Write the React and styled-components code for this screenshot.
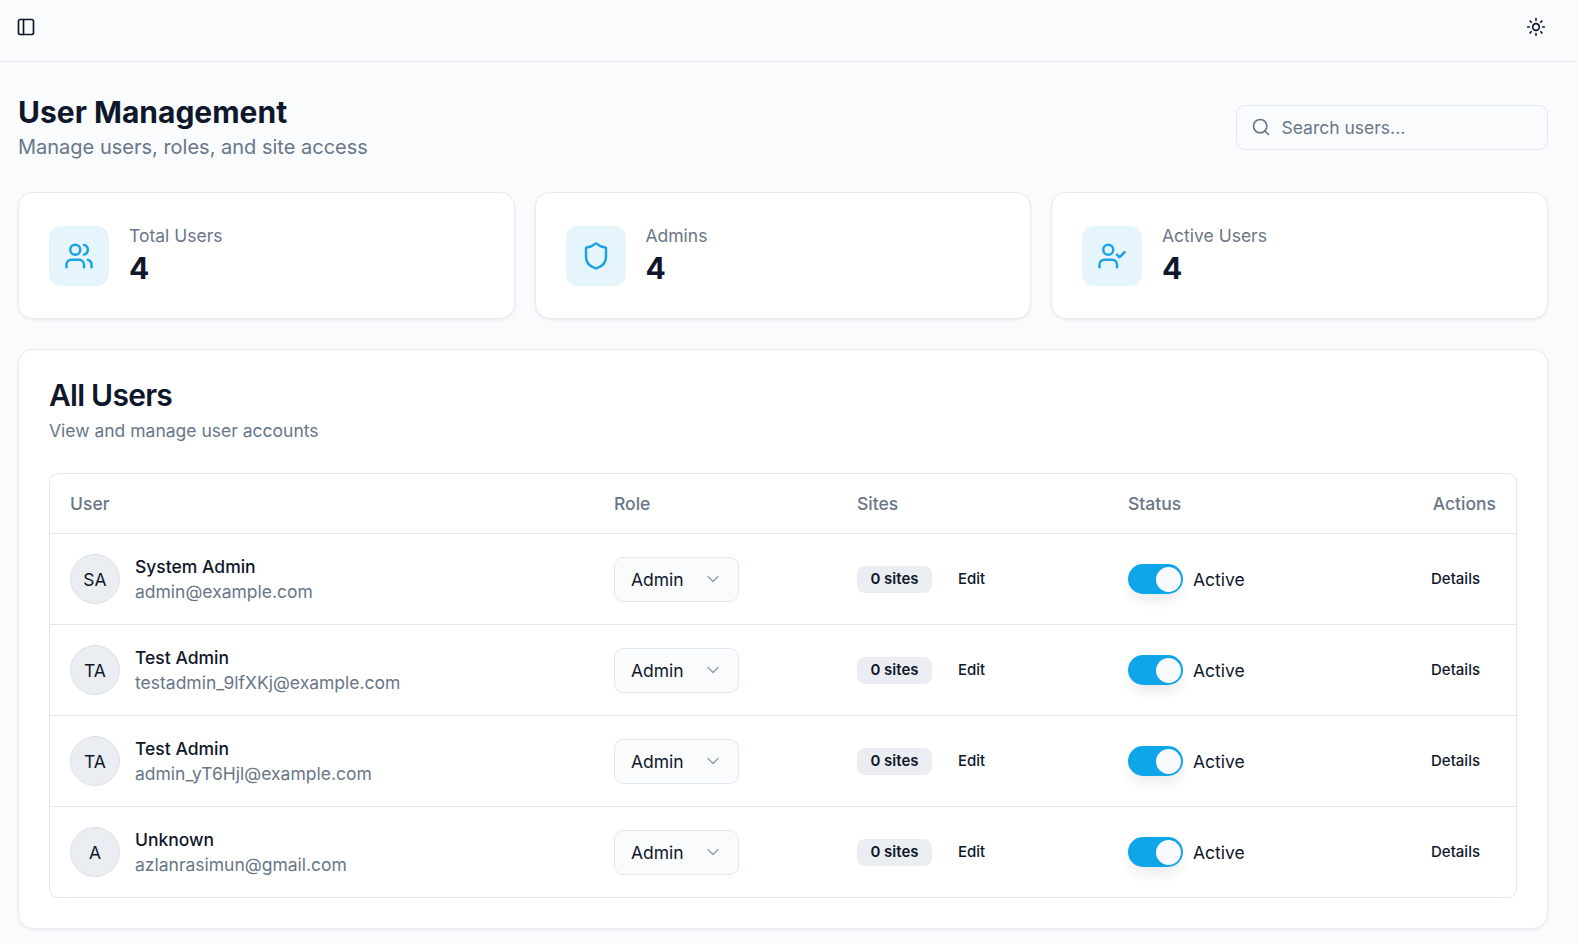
import React from 'react'
import styled, { createGlobalStyle } from 'styled-components'
import { PanelLeft, Sun, Search, Users, Shield, UserCheck, ChevronDown } from 'lucide-react'

const GlobalStyle = createGlobalStyle`
  html, body {
    margin: 0;
    padding: 0;
    background: #ffffff;
  }
  body {
    font-family: Inter, "Liberation Sans", sans-serif;
    color: #0f172a;
  }
  * { box-sizing: border-box; }
`

//----------------------------//
//   Page shell
//----------------------------//
const Page = styled.div`
  margin-right: 4px;
  height: 944px;
  overflow: hidden;
  background: #f9fbfd;
`
const TopBar = styled.header`
  height: 62px;
  padding: 0 32px 7px 16px;
  display: flex;
  align-items: center;
  justify-content: space-between;
  border-bottom: 1px solid #e2e8f0;
`
const IconButton = styled.span`
  display: flex;
  color: #0f172a;
`
const Main = styled.main`
  padding: 32px 30.5px 0 18px;
`
const PageHead = styled.div`
  display: flex;
  align-items: center;
  justify-content: space-between;
  margin-bottom: 31px;
`
const Title = styled.h1`
  margin: 0;
  font-size: 30px;
  line-height: 37.5px;
  font-weight: 700;
`
const Subtitle = styled.p`
  margin: 1px 0 0;
  font-size: 20px;
  line-height: 28px;
  color: #687688;
`
const SearchBox = styled.div`
  width: 312px;
  height: 45px;
  padding: 0 14px;
  display: flex;
  align-items: center;
  gap: 11px;
  border: 1px solid #e2e8f0;
  border-radius: 9px;
  background: #f9fbfd;
  color: #687688;
  font-size: 17.5px;
`

//----------------------------//
//   Stat cards
//----------------------------//
const StatGrid = styled.section`
  display: grid;
  grid-template-columns: repeat(3, 1fr);
  gap: 20px;
  margin-bottom: 30px;
`
const Card = styled.div`
  background: #ffffff;
  border: 1px solid #e8ecf1;
  border-radius: 15px;
  box-shadow: 0 1px 3px rgba(15, 23, 42, 0.07);
`
const StatCard = styled(Card)`
  padding: 30px;
  display: flex;
  align-items: center;
  gap: 20px;
`
const StatIcon = styled.div`
  width: 60px;
  height: 60px;
  margin-top: 1px;
  border-radius: 12px;
  background: #e6f5fc;
  color: #1ba3e3;
  display: flex;
  align-items: center;
  justify-content: center;
`
const StatLabel = styled.div`
  font-size: 17.5px;
  line-height: 25px;
  color: #687688;
`
const StatValue = styled.div`
  margin-top: 2.5px;
  font-size: 30px;
  line-height: 37.5px;
  font-weight: 700;
`

//----------------------------//
//   Users table
//----------------------------//
const UsersCard = styled(Card)`
  padding: 30px;
`
const CardTitle = styled.h2`
  margin: 0;
  font-size: 30px;
  line-height: 30px;
  font-weight: 600;
  letter-spacing: -0.75px;
`
const CardText = styled.p`
  margin: 8.75px 0 30px;
  font-size: 17.5px;
  line-height: 25px;
  color: #687688;
`
const Table = styled.div`
  border: 1px solid #e2e8f0;
  border-radius: 9px;
`
const Row = styled.div`
  display: grid;
  grid-template-columns: 544px 243px 271px 1fr auto;
  align-items: center;
  padding: 0 19.5px 0 20px;
  height: ${(props) => (props.$head ? '60px' : '91px')};
  border-bottom: 1px solid #e2e8f0;
  &:last-child {
    border-bottom: none;
    height: 90px;
  }
`
const HeadCell = styled.div`
  font-size: 17.5px;
  font-weight: 500;
  color: #687688;
`
const UserCell = styled.div`
  display: flex;
  align-items: center;
  gap: 15px;
`
const Avatar = styled.div`
  width: 50px;
  height: 50px;
  border-radius: 50%;
  background: #eaeef2;
  border: 1px solid #dde2e8;
  display: flex;
  align-items: center;
  justify-content: center;
  font-size: 17.5px;
`
const UserName = styled.div`
  font-size: 17.5px;
  line-height: 25px;
  font-weight: 500;
`
const UserEmail = styled.div`
  font-size: 17.5px;
  line-height: 25px;
  color: #687688;
`
const RoleSelect = styled.div`
  width: 125px;
  height: 45px;
  padding: 0 15px 0 16px;
  display: flex;
  align-items: center;
  justify-content: space-between;
  background: #f9fbfd;
  border: 1px solid #e2e8f0;
  border-radius: 9px;
  font-size: 17.5px;
  svg {
    color: #64748b;
    opacity: 0.7;
  }
`
const SitesCell = styled.div`
  display: flex;
  align-items: center;
  gap: 26px;
`
const Badge = styled.span`
  width: 75px;
  height: 27px;
  padding-bottom: 1px;
  display: flex;
  align-items: center;
  justify-content: center;
  background: #eaeef2;
  border-radius: 8px;
  font-size: 15px;
  font-weight: 600;
`
const LinkButton = styled.span`
  margin-bottom: 2px;
  font-size: 15px;
  font-weight: 500;
`
const StatusCell = styled.div`
  display: flex;
  align-items: center;
  gap: 10px;
  font-size: 17.5px;
`
const Toggle = styled.span`
  width: 55px;
  height: 30px;
  padding: 2.5px;
  display: flex;
  justify-content: flex-end;
  border-radius: 15px;
  background: #0ea5e9;
  box-shadow: 0 8px 14px -3px rgba(15, 23, 42, 0.1);
`
const Thumb = styled.span`
  width: 25px;
  height: 25px;
  border-radius: 50%;
  background: #f8fafc;
`
const ActionsCell = styled.div`
  display: flex;
  justify-content: flex-end;
  padding-right: 16px;
`

const stats = [
  { label: 'Total Users', value: 4, Icon: Users },
  { label: 'Admins', value: 4, Icon: Shield },
  { label: 'Active Users', value: 4, Icon: UserCheck },
]

const users = [
  { initials: 'SA', name: 'System Admin', email: 'admin@example.com' },
  { initials: 'TA', name: 'Test Admin', email: 'testadmin_9lfXKj@example.com' },
  { initials: 'TA', name: 'Test Admin', email: 'admin_yT6Hjl@example.com' },
  { initials: 'A', name: 'Unknown', email: 'azlanrasimun@gmail.com' },
]

const App = () => {
  return (
    <Page>
      <GlobalStyle />
      <TopBar>
        <IconButton><PanelLeft size={20} /></IconButton>
        <IconButton><Sun size={20} /></IconButton>
      </TopBar>
      <Main>
        <PageHead>
          <div>
            <Title>User Management</Title>
            <Subtitle>Manage users, roles, and site access</Subtitle>
          </div>
          <SearchBox>
            <Search size={20} />
            Search users...
          </SearchBox>
        </PageHead>

        <StatGrid>
          {stats.map(({ label, value, Icon }) => (
            <StatCard key={label}>
              <StatIcon><Icon size={30} /></StatIcon>
              <div>
                <StatLabel>{label}</StatLabel>
                <StatValue>{value}</StatValue>
              </div>
            </StatCard>
          ))}
        </StatGrid>

        <UsersCard>
          <CardTitle>All Users</CardTitle>
          <CardText>View and manage user accounts</CardText>
          <Table>
            <Row $head>
              <HeadCell>User</HeadCell>
              <HeadCell>Role</HeadCell>
              <HeadCell>Sites</HeadCell>
              <HeadCell>Status</HeadCell>
              <HeadCell>Actions</HeadCell>
            </Row>
            {users.map((user) => (
              <Row key={user.email}>
                <UserCell>
                  <Avatar>{user.initials}</Avatar>
                  <div>
                    <UserName>{user.name}</UserName>
                    <UserEmail>{user.email}</UserEmail>
                  </div>
                </UserCell>
                <RoleSelect>Admin <ChevronDown size={20} strokeWidth={1.5} /></RoleSelect>
                <SitesCell>
                  <Badge>0 sites</Badge>
                  <LinkButton>Edit</LinkButton>
                </SitesCell>
                <StatusCell>
                  <Toggle><Thumb /></Toggle>
                  Active
                </StatusCell>
                <ActionsCell>
                  <LinkButton>Details</LinkButton>
                </ActionsCell>
              </Row>
            ))}
          </Table>
        </UsersCard>
      </Main>
    </Page>
  )
}

export default App
